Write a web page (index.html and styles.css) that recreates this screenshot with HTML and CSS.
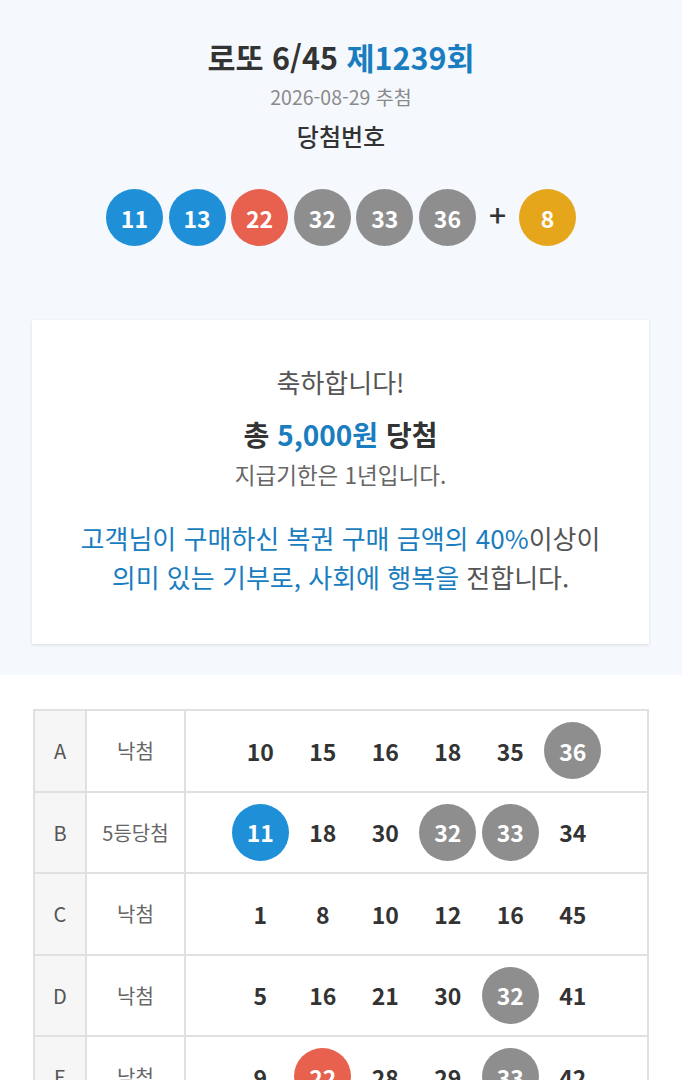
FILE: index.html
```html
<!DOCTYPE html>
<html lang="ko">
<head>
<meta charset="utf-8">
<link rel="stylesheet" href="styles.css">
</head>
<body>
<div class="top">
  <h1 class="title">로또 6/45 <span class="blue">제1239회</span></h1>
  <div class="date">2026-08-29 추첨</div>
  <div class="label">당첨번호</div>
  <div class="balls">
    <span class="ball b-blue">11</span>
    <span class="ball b-blue">13</span>
    <span class="ball b-red">22</span>
    <span class="ball b-gray">32</span>
    <span class="ball b-gray">33</span>
    <span class="ball b-gray">36</span>
    <span class="plus">+</span>
    <span class="ball b-yellow">8</span>
  </div>
  <div class="card">
    <div class="congrats">축하합니다!</div>
    <div class="prize">총 <span class="blue">5,000원</span> 당첨</div>
    <div class="deadline">지급기한은 1년입니다.</div>
    <div class="donate"><span class="blue">고객님이 구매하신 복권 구매 금액의 40%</span>이상이<br><span class="blue">의미 있는 기부로, 사회에 행복을</span> 전합니다.</div>
  </div>
</div>
<div class="bottom">
  <div class="table">
    <div class="row">
      <div class="c-key">A</div>
      <div class="c-res">낙첨</div>
      <div class="c-nums">
        <span class="n">10</span><span class="n">15</span><span class="n">16</span><span class="n">18</span><span class="n">35</span><span class="n ball b-gray">36</span>
      </div>
    </div>
    <div class="row">
      <div class="c-key">B</div>
      <div class="c-res">5등당첨</div>
      <div class="c-nums">
        <span class="n ball b-blue">11</span><span class="n">18</span><span class="n">30</span><span class="n ball b-gray">32</span><span class="n ball b-gray">33</span><span class="n">34</span>
      </div>
    </div>
    <div class="row">
      <div class="c-key">C</div>
      <div class="c-res">낙첨</div>
      <div class="c-nums">
        <span class="n">1</span><span class="n">8</span><span class="n">10</span><span class="n">12</span><span class="n">16</span><span class="n">45</span>
      </div>
    </div>
    <div class="row">
      <div class="c-key">D</div>
      <div class="c-res">낙첨</div>
      <div class="c-nums">
        <span class="n">5</span><span class="n">16</span><span class="n">21</span><span class="n">30</span><span class="n ball b-gray">32</span><span class="n">41</span>
      </div>
    </div>
    <div class="row">
      <div class="c-key">E</div>
      <div class="c-res">낙첨</div>
      <div class="c-nums">
        <span class="n">9</span><span class="n ball b-red">22</span><span class="n">28</span><span class="n">29</span><span class="n ball b-gray">33</span><span class="n">42</span>
      </div>
    </div>
  </div>
</div>
</body>
</html>
```
FILE: styles.css
```css
* { box-sizing: border-box; }
html, body { margin: 0; padding: 0; }
body {
  width: 682px;
  font-family: "Noto Sans CJK KR", "Noto Sans", sans-serif;
  color: #333;
  background: #fff;
}
.blue { color: #1a7dc0; }
.top {
  background: #f5f9fd;
  padding: 36px 0 31px;
  text-align: center;
}
.title {
  margin: 0;
  font-size: 30.5px;
  line-height: 42px;
  font-weight: 700;
  color: #333;
}
.date {
  margin-top: 6px;
  font-size: 19.5px;
  line-height: 26px;
  color: #8a8a8a;
}
.label {
  margin-top: 11px;
  font-size: 24px;
  line-height: 30px;
  font-weight: 500;
  color: #333;
}
.balls {
  margin-top: 35px;
  display: flex;
  justify-content: center;
  align-items: center;
  gap: 5.6px;
}
.ball {
  width: 57px;
  height: 57px;
  border-radius: 50%;
  display: inline-flex;
  align-items: center;
  justify-content: center;
  color: #fff;
  font-family: "Noto Sans CJK KR", "Noto Sans", sans-serif;
  font-weight: 700;
  font-size: 23px;
}
.b-blue { background: #1f90d8; }
.b-red { background: #e8604e; }
.b-gray { background: #8e8e8e; }
.b-yellow { background: #e5a61b; }
.plus {
  width: 32px;
  font-size: 30px;
  font-weight: 500;
  color: #333;
  line-height: 57px;
  padding-bottom: 6px;
}
.card {
  margin: 71px 33px 0 32px;
  background: #fff;
  box-shadow: 0 1px 3px rgba(0,0,0,0.12);
  padding: 46px 0 48px;
}
.congrats {
  font-size: 26px;
  line-height: 32px;
  color: #555;
}
.prize {
  margin-top: 18px;
  font-size: 28px;
  line-height: 36px;
  font-weight: 700;
  color: #333;
}
.deadline {
  margin-top: 8px;
  font-size: 22.5px;
  line-height: 28px;
  color: #666;
}
.donate {
  margin-top: 30px;
  font-size: 26px;
  line-height: 39px;
  color: #555;
}
.bottom {
  padding: 34px 33px 0 33px;
}
.table {
  border-top: 2px solid #e0e0e0;
  border-left: 2px solid #e0e0e0;
  border-right: 2px solid #e0e0e0;
}
.row {
  display: flex;
  height: 81.5px;
  border-bottom: 2px solid #e0e0e0;
}
.c-key {
  width: 52px;
  background: #f6f6f6;
  border-right: 2px solid #e0e0e0;
  display: flex;
  align-items: center;
  justify-content: center;
  font-size: 20px;
  color: #555;
}
.c-res {
  width: 99px;
  border-right: 2px solid #e0e0e0;
  display: flex;
  align-items: center;
  justify-content: center;
  font-size: 20px;
  color: #666;
}
.c-nums {
  flex: 1;
  display: flex;
  align-items: center;
  justify-content: center;
  gap: 5.5px;
}
.n {
  width: 57px;
  height: 57px;
  display: inline-flex;
  align-items: center;
  justify-content: center;
  font-family: "Noto Sans CJK KR", "Noto Sans", sans-serif;
  font-weight: 700;
  font-size: 23px;
  color: #333;
}
.n.ball { color: #fff; }
```
